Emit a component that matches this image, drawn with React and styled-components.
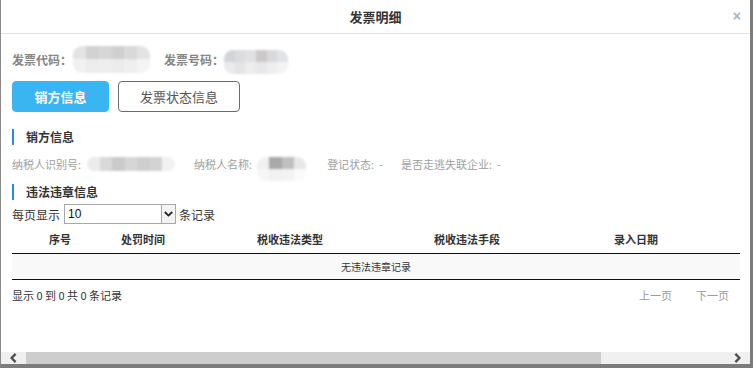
import React from 'react';
import styled, { createGlobalStyle } from 'styled-components';

const GlobalStyle = createGlobalStyle`
  html, body {
    margin: 0;
    padding: 0;
    background: #fff;
  }
  body {
    font-family: "Microsoft YaHei", "Noto Sans CJK SC", "Liberation Sans", sans-serif;
    color: #333;
  }
  * {
    box-sizing: border-box;
  }
`;

const Modal = styled.div`
  width: 753px;
  height: 368px;
  display: flex;
  flex-direction: column;
  background: #fff;
  border-left: 1px solid #8a8a8a;
  border-right: 3px solid #7c7c7c;
  border-bottom: 4px solid #7c7c7c;
  overflow: hidden;
`;

const Header = styled.div`
  height: 34px;
  flex: none;
  display: grid;
  grid-template-columns: 1fr auto 1fr;
  align-items: center;
  border-bottom: 1px solid #e2e2e2;
`;

const Title = styled.h3`
  grid-column: 2;
  margin: 0;
  font-size: 13px;
  font-weight: bold;
  color: #333;
  line-height: 34px;
`;

const Close = styled.span`
  grid-column: 3;
  justify-self: end;
  margin-right: 9px;
  margin-top: -3px;
  font-family: "Liberation Sans", sans-serif;
  font-size: 14px;
  font-weight: bold;
  color: #aab4bc;
  line-height: 1;
`;

const Body = styled.div`
  flex: 1;
  padding: 0 11px;
  display: flex;
  flex-direction: column;
`;

const CodeRow = styled.div`
  margin-top: 15px;
  height: 20px;
  display: flex;
  align-items: center;
`;

const CodeLabel = styled.span`
  font-size: 12px;
  font-weight: bold;
  color: #858585;
  white-space: nowrap;
  margin-right: ${({ gap }) => gap}px;
`;

const Mosaic = styled.div`
  width: ${({ w }) => w}px;
  height: ${({ h }) => h}px;
  margin-right: ${({ mr }) => mr || 0}px;
  margin-top: ${({ mt }) => mt || 0}px;
  flex: none;
  display: grid;
  grid-template-columns: repeat(${({ cols }) => cols}, 1fr);
  border-radius: 9px;
  overflow: hidden;
  filter: blur(0.8px);
`;

const Cell = styled.span`
  background: ${({ c }) => c};
`;

const ButtonRow = styled.div`
  margin-top: 12px;
  display: flex;
  gap: 9px;
`;

const TabButton = styled.button`
  height: 31px;
  width: ${({ w }) => w}px;
  border-radius: 4px;
  font-family: inherit;
  font-size: 13px;
  cursor: pointer;
  padding: 0;
  border: 1px solid ${({ active }) => (active ? '#3bb4f2' : '#6b6b6b')};
  background: ${({ active }) => (active ? '#3bb4f2' : '#fff')};
  color: ${({ active }) => (active ? '#fff' : '#555')};
  font-weight: ${({ active }) => (active ? 'bold' : 'normal')};
`;

const SectionTitle = styled.div`
  margin-top: ${({ mt }) => mt}px;
  height: 16px;
  line-height: 16px;
  border-left: 2px solid #2b8ae4;
  padding-left: 12px;
  font-size: 12px;
  font-weight: bold;
  color: #333;
`;

const InfoRow = styled.div`
  margin-top: 11px;
  height: 16px;
  display: flex;
  align-items: center;
  font-size: 11px;
  color: #a0a0a0;
  white-space: nowrap;
`;

const InfoText = styled.span`
  margin-right: ${({ mr }) => mr}px;
`;

const LengthRow = styled.div`
  margin-top: 4px;
  height: 20px;
  display: flex;
  align-items: center;
  gap: 3px;
  font-size: 12px;
  color: #333;
`;

const SelectBox = styled.div`
  position: relative;
  width: 112px;
  height: 20px;
  margin-left: 1px;
`;

const Select = styled.select`
  appearance: none;
  width: 100%;
  height: 100%;
  border: 1px solid #a9a9a9;
  border-radius: 0;
  background: #fff;
  font-family: "Liberation Sans", sans-serif;
  font-size: 12px;
  color: #111;
  padding: 0 0 0 3px;
`;

const SelectArrow = styled.span`
  position: absolute;
  right: 0;
  top: 0;
  width: 15px;
  height: 20px;
  border: 1px solid #a9a9a9;
  background: #f3f3f3;
  display: flex;
  align-items: center;
  justify-content: center;
  pointer-events: none;
`;

const Table = styled.table`
  margin-top: 1px;
  width: 728px;
  border-collapse: collapse;
  font-size: 11px;
`;

const Th = styled.th`
  height: 28px;
  width: ${({ w }) => w}px;
  font-weight: bold;
  color: #333;
  text-align: center;
  border-bottom: 1px solid #111;
  padding: 0;
`;

const EmptyCell = styled.td`
  height: 26px;
  background: #f9f9f9;
  border-bottom: 1px solid #111;
  text-align: center;
  font-size: 10px;
  color: #333;
  padding: 0;
`;

const Footer = styled.div`
  margin-top: 5px;
  width: 728px;
  height: 20px;
  display: flex;
  align-items: center;
  justify-content: space-between;
  font-size: 11px;
  color: #333;
`;

const Pager = styled.div`
  display: flex;
  gap: 24px;
  margin-right: 11px;
  color: #9a9a9a;
`;

const ScrollBar = styled.div`
  flex: none;
  height: 12px;
  display: flex;
  background: #f0f0f0;
`;

const ScrollButton = styled.span`
  width: ${({ w }) => w}px;
  flex: none;
  display: flex;
  align-items: center;
  justify-content: center;
`;

const Thumb = styled.span`
  width: 575px;
  flex: none;
  background: #cdcdcd;
`;

const Track = styled.span`
  flex: 1;
`;

const Chevron = ({ dir }) => (
  <svg width="7" height="10" viewBox="0 0 7 10">
    <path
      d={dir === 'left' ? 'M5.6 0.8 L1.6 5 L5.6 9.2' : 'M1.4 0.8 L5.4 5 L1.4 9.2'}
      fill="none"
      stroke="#505050"
      strokeWidth="2.4"
    />
  </svg>
);

const blur = (rows) => rows.flat().map((c, i) => <Cell key={i} c={c} />);

const codeCells = [
  ['#e4e4e4', '#d2d2d2', '#d6d6d6', '#cfcfcf', '#d9d9d9', '#e3e3e3'],
  ['#f1f1f1', '#ececec', '#eeeeee', '#ebebeb', '#efefef', '#f4f4f4'],
];
const numberCells = [
  ['#d2d4d8', '#dcdcdf', '#e1e1e4', '#cdc9c8', '#d8d9dc', '#e2e3e6'],
  ['#eaeaec', '#e4e4e6', '#ededee', '#e8e8ea', '#eeeef0', '#f3f3f4'],
];
const idCells = [['#ececec', '#d8d8d8', '#cbcbcb', '#d6d6d6', '#cfcfcf', '#d3d3d3', '#f2f2f2']];
const nameCells = [
  ['#f0f0f0', '#a9a9a9', '#c0c0c0', '#e8e8e8'],
  ['#f6f6f6', '#f1f1f1', '#f3f3f3', '#fafafa'],
];

const App = () => (
  <>
    <GlobalStyle />
    <Modal>
      <Header>
        <Title>发票明细</Title>
        <Close>×</Close>
      </Header>
      <Body>
        <CodeRow>
          <CodeLabel gap={1}>发票代码：</CodeLabel>
          <Mosaic w={77} h={27} cols={6} mr={14}>{blur(codeCells)}</Mosaic>
          <CodeLabel gap={0}>发票号码：</CodeLabel>
          <Mosaic w={64} h={24} cols={6} mt={6}>{blur(numberCells)}</Mosaic>
        </CodeRow>

        <ButtonRow>
          <TabButton active w={97}>销方信息</TabButton>
          <TabButton w={122}>发票状态信息</TabButton>
        </ButtonRow>

        <SectionTitle mt={17}>销方信息</SectionTitle>
        <InfoRow>
          <InfoText mr={6}>纳税人识别号:</InfoText>
          <Mosaic w={88} h={14} cols={7} mr={19}>{blur(idCells)}</Mosaic>
          <InfoText mr={5}>纳税人名称:</InfoText>
          <Mosaic w={49} h={24} cols={4} mr={21} mt={10}>{blur(nameCells)}</Mosaic>
          <InfoText mr={18}>登记状态:&nbsp;&nbsp;-</InfoText>
          <InfoText mr={0}>是否走逃失联企业:&nbsp;&nbsp;-</InfoText>
        </InfoRow>

        <SectionTitle mt={12}>违法违章信息</SectionTitle>
        <LengthRow>
          每页显示
          <SelectBox>
            <Select defaultValue="10">
              <option value="10">10</option>
              <option value="25">25</option>
              <option value="50">50</option>
            </Select>
            <SelectArrow>
              <svg width="9" height="6" viewBox="0 0 9 6">
                <path d="M0.8 1 L4.5 4.6 L8.2 1" fill="none" stroke="#222" strokeWidth="1.8" />
              </svg>
            </SelectArrow>
          </SelectBox>
          条记录
        </LengthRow>

        <Table>
          <thead>
            <tr>
              <Th w={96}>序号</Th>
              <Th w={70}>处罚时间</Th>
              <Th w={224}>税收违法类型</Th>
              <Th w={130}>税收违法手段</Th>
              <Th>录入日期</Th>
            </tr>
          </thead>
          <tbody>
            <tr>
              <EmptyCell colSpan={5}>无违法违章记录</EmptyCell>
            </tr>
          </tbody>
        </Table>

        <Footer>
          <span>显示 0 到 0 共 0 条记录</span>
          <Pager>
            <span>上一页</span>
            <span>下一页</span>
          </Pager>
        </Footer>
      </Body>
      <ScrollBar>
        <ScrollButton w={25}>
          <Chevron dir="left" />
        </ScrollButton>
        <Thumb />
        <Track />
        <ScrollButton w={26}>
          <Chevron dir="right" />
        </ScrollButton>
      </ScrollBar>
    </Modal>
  </>
);

export default App;
